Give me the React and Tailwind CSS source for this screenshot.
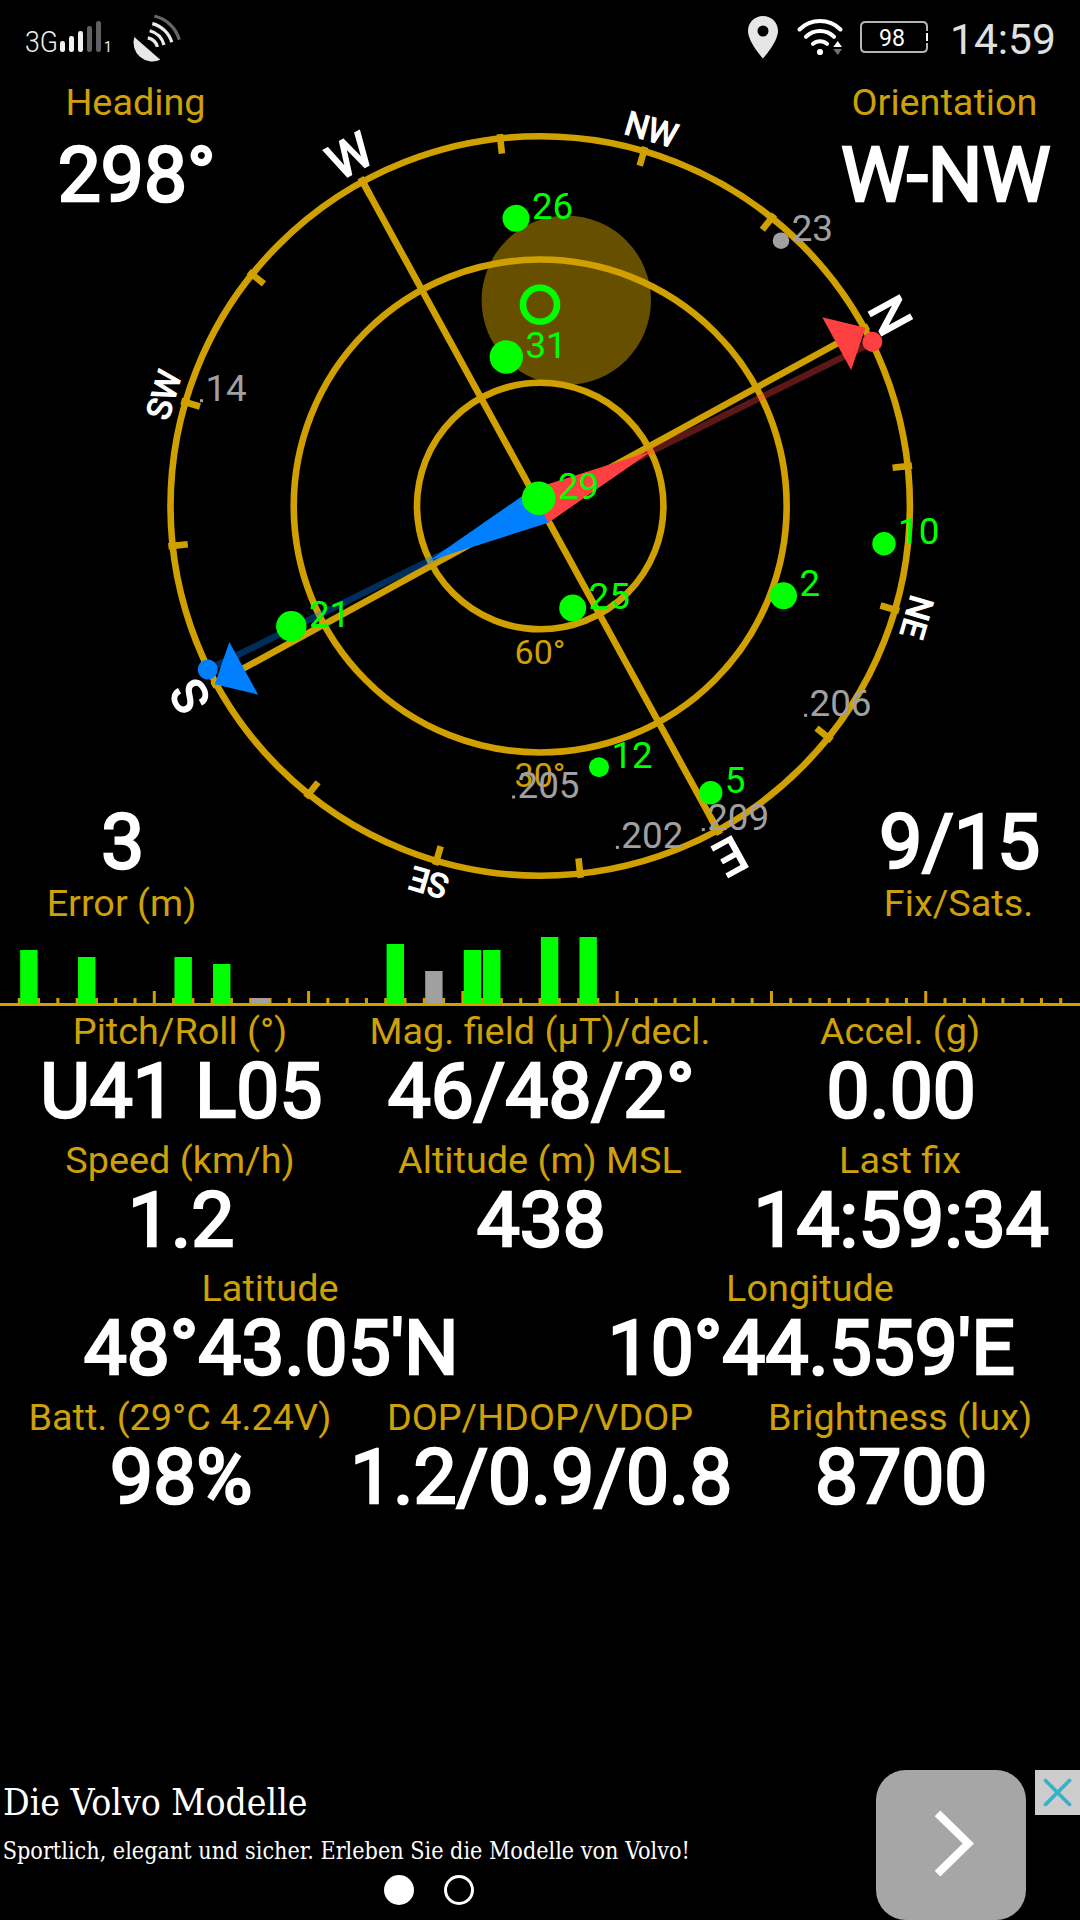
import React from 'react';

const GOLD = '#d0a000';
const GREEN = '#00ff00';
const GRAY = '#a0a0a0';
const RED = '#ff4040';
const BLUE = '#0080ff';

const CENTER = { x: 540.2, y: 506 };
const RADIUS = 369.7;
const NORTH = 61.3;
const MAGNETIC = 63.8;

const directions = [
  { name: 'N', offset: 0, main: true },
  { name: 'NE', offset: 45 },
  { name: 'E', offset: 90, main: true },
  { name: 'SE', offset: 135 },
  { name: 'S', offset: 180, main: true },
  { name: 'SW', offset: 225 },
  { name: 'W', offset: 270, main: true },
  { name: 'NW', offset: 315 },
];

const satellites = [
  { id: '26', x: 516, y: 218.3, r: 13.5, fix: true },
  { id: '31', x: 506.3, y: 357, r: 16.7, fix: true },
  { id: '29', x: 538.7, y: 498.2, r: 16.8, fix: true },
  { id: '25', x: 572.7, y: 608, r: 13.5, fix: true },
  { id: '2', x: 783.5, y: 595.7, r: 13.5, fix: true },
  { id: '10', x: 884, y: 543.7, r: 11.7, fix: true },
  { id: '12', x: 599, y: 767.2, r: 10, fix: true },
  { id: '5', x: 710.7, y: 792.7, r: 11.7, fix: true },
  { id: '21', x: 291.3, y: 626.2, r: 15.2, fix: true },
  { id: '23', x: 781, y: 240.7, r: 8.3 },
  { id: '14', x: 201.5, y: 400.7, r: 1.5 },
  { id: '205', x: 513.6, y: 797, r: 1.5 },
  { id: '202', x: 617.4, y: 847.4, r: 1.5 },
  { id: '209', x: 703.3, y: 829.6, r: 1.5 },
  { id: '206', x: 805.6, y: 715.3, r: 1.5 },
];

const signals = [
  { slot: 1, top: 950, fix: true },
  { slot: 4, top: 957, fix: true },
  { slot: 9, top: 957, fix: true },
  { slot: 11, top: 964, fix: true },
  { slot: 13, top: 998 },
  { slot: 20, top: 944, fix: true },
  { slot: 22, top: 971 },
  { slot: 24, top: 950, fix: true },
  { slot: 25, top: 950, fix: true },
  { slot: 28, top: 937, fix: true },
  { slot: 30, top: 937, fix: true },
];

const rows = [
  [
    { label: 'Pitch/Roll (°)', value: 'U41 L05' },
    { label: 'Mag. field (µT)/decl.', value: '46/48/2°' },
    { label: 'Accel. (g)', value: '0.00' },
  ],
  [
    { label: 'Speed (km/h)', value: '1.2' },
    { label: 'Altitude (m) MSL', value: '438' },
    { label: 'Last fix', value: '14:59:34' },
  ],
  [
    { label: 'Latitude', value: "48°43.05'N" },
    { label: 'Longitude', value: "10°44.559'E" },
  ],
  [
    { label: 'Batt. (29°C 4.24V)', value: '98%' },
    { label: 'DOP/HDOP/VDOP', value: '1.2/0.9/0.8' },
    { label: 'Brightness (lux)', value: '8700' },
  ],
];

const Label = ({ children }) => (
  <div className="text-[37.8px] leading-[45px] text-[#cea00a] whitespace-nowrap">{children}</div>
);

const Value = ({ children }) => (
  <div className="pt-px pl-[2.4px] text-[76.6px] leading-[73px] text-white whitespace-nowrap [-webkit-text-stroke:2.6px_white]">
    {children}
  </div>
);

const StatusBar = () => (
  <header className="flex h-[76px] items-start justify-between">
    <svg className="h-[76px] w-[200px]" viewBox="0 0 200 76">
      <text x="25" y="52" fontSize="29" fontWeight="300" fill="#f0f0f0" textLength="33" lengthAdjust="spacingAndGlyphs">
        3G
      </text>
      {[41, 36, 31, 26, 21].map((top, i) => (
        <rect key={top} x={60 + i * 9} y={top} width="5" height={52 - top} rx="2.2" fill={i < 3 ? '#f0f0f0' : '#606060'} />
      ))}
      <text x="104" y="52" fontSize="14" fill="#f0f0f0">1</text>
      <path d="M134.3 37 L160.3 59.7 A18.9 18.9 0 0 1 134.3 37 Z" fill="#e8e8e8" />
      <g fill="none" stroke="#ececec" strokeWidth="3.2">
        <path d="M147.8 37.9 A13 13 0 0 1 157.5 46.9" />
        <path d="M149.7 30.8 A20 20 0 0 1 164 45" />
        <path d="M152.3 23.6 A27 27 0 0 1 171.8 42.2" />
        <path d="M154.4 16 A34 34 0 0 1 179.3 39.8" stroke="#666666" />
      </g>
    </svg>

    <svg className="h-[76px] w-[360px]" viewBox="720 0 360 76">
      <path
        fillRule="evenodd"
        fill="#e6e6e6"
        d="M763 16 C754.6 16 748 22.6 748 31 C748 42 763 58.5 763 58.5 C763 58.5 778 42 778 31 C778 22.6 771.4 16 763 16 Z M763 25.5 A5.5 5.5 0 1 1 763 36.5 A5.5 5.5 0 1 1 763 25.5 Z"
      />
      <g fill="none" stroke="#ffffff" strokeWidth="4" strokeLinecap="round">
        <path d="M799.5 29.5 A29 29 0 0 1 840.5 29.5" />
        <path d="M806 36.8 A20 20 0 0 1 834 36.8" />
        <path d="M813 43.8 A10.5 10.5 0 0 1 827 43.8" />
      </g>
      <circle cx="820" cy="52" r="3.1" fill="#ffffff" />
      <path d="M833.3 47 L837.7 41 L842 47 Z" fill="#ffffff" />
      <path d="M833.3 49 L837.7 55 L842 49 Z" fill="#707070" />
      <path
        d="M927 31 V26.5 Q927 22 922.5 22 H865.5 Q861 22 861 26.5 V47.5 Q861 52 865.5 52 H922.5 Q927 52 927 47.5 V43"
        fill="none"
        stroke="#b4b4b4"
        strokeWidth="2"
      />
      <path d="M927 33 V41" stroke="#ffffff" strokeWidth="2" />
      <text x="879" y="45.7" fontSize="23.5" fill="#ffffff" textLength="26" lengthAdjust="spacingAndGlyphs">98</text>
      <text x="950" y="54.3" fontSize="42.5" fill="#e0e0e0">14:59</text>
    </svg>
  </header>
);

const Needle = ({ color, angle }) => (
  <g transform={`translate(${CENTER.x} ${CENTER.y}) rotate(${angle})`}>
    <path d={`M0 0 V${-RADIUS}`} stroke={color} strokeOpacity="0.36" strokeWidth="6.6" />
    <path d="M-18.6 0 L0 -124 L18.6 0 Z" fill={color} />
  </g>
);

const Pointer = ({ color, angle, dotAngle }) => (
  <>
    <path
      transform={`translate(${CENTER.x} ${CENTER.y}) rotate(${angle})`}
      d="M0 -371 L-30 -338 L30 -338 Z"
      fill={color}
    />
    <circle
      transform={`translate(${CENTER.x} ${CENTER.y}) rotate(${dotAngle})`}
      cx="0"
      cy="-370.5"
      r="10"
      fill={color}
    />
  </>
);

const SkyPlot = () => (
  <svg className="col-start-1 row-start-1 h-[860px] w-[1080px]" viewBox="0 76 1080 860">
    {/* Sun / moon area */}
    <circle cx="566.3" cy="300.3" r="84.7" fill="#665000" />

    <g fill="none" stroke={GOLD} strokeWidth="6.6">
      <circle cx={CENTER.x} cy={CENTER.y} r={RADIUS} />
      <circle cx={CENTER.x} cy={CENTER.y} r={(RADIUS * 2) / 3} />
      <circle cx={CENTER.x} cy={CENTER.y} r={RADIUS / 3} />
      <g transform={`translate(${CENTER.x} ${CENTER.y}) rotate(${NORTH})`}>
        <path d="M0 -374 V374 M-374 0 H374" />
        {Array.from({ length: 16 }, (_, i) => (
          <path key={i} d="M0 -374 V-354.5" transform={`rotate(${i * 22.5})`} />
        ))}
      </g>
    </g>

    <text x="540" y="664.2" fontSize="34" fill={GOLD} textAnchor="middle">60°</text>
    <text x="540" y="787.2" fontSize="34" fill={GOLD} textAnchor="middle">30°</text>

    {directions.map((d) => (
      <text
        key={d.name}
        transform={`translate(${CENTER.x} ${CENTER.y}) rotate(${NORTH + d.offset})`}
        x="1"
        y={d.main ? -381.5 : -381}
        fontSize={d.main ? 48.5 : 33}
        fill="#ffffff"
        stroke="#ffffff"
        strokeWidth={d.main ? 1.9 : 1.4}
        textAnchor="middle"
      >
        {d.name}
      </text>
    ))}

    <Needle color={RED} angle={MAGNETIC} />
    <Needle color={BLUE} angle={MAGNETIC + 180} />
    <Pointer color={RED} angle={NORTH} dotAngle={MAGNETIC - 0.1} />
    <Pointer color={BLUE} angle={NORTH + 180} dotAngle={MAGNETIC + 180} />

    <circle cx="540" cy="304.7" r="17" fill="none" stroke={GREEN} strokeWidth="6.6" />

    {satellites.map((s) => (
      <g key={s.id} fill={s.fix ? GREEN : GRAY}>
        {s.r < 2 ? (
          <rect x={s.x - s.r} y={s.y - s.r} width={s.r * 2} height={s.r * 2} />
        ) : (
          <circle cx={s.x} cy={s.y} r={s.r} />
        )}
        <text x={s.x + s.r + 2.4} y={s.y + 0.5} fontSize="36.8">{s.id}</text>
      </g>
    ))}
  </svg>
);

const SignalStrip = () => (
  <svg className="block h-[73px] w-[1080px]" viewBox="0 936 1080 73">
    {Array.from({ length: 55 }, (_, i) => {
      const top = (i + 1) % 8 === 0 ? 991 : 998;
      return <rect key={i} x={(i + 1) * 19.286 - 1.5} y={top} width="3" height={1003 - top} fill={GOLD} />;
    })}
    <rect x="0" y="1003" width="1080" height="3" fill={GOLD} />
    {signals.map((s) => (
      <rect
        key={s.slot}
        x={s.slot * 19.286 + 0.9}
        y={s.top}
        width="17.4"
        height={1003.5 - s.top}
        fill={s.fix ? GREEN : GRAY}
      />
    ))}
  </svg>
);

const AdBanner = () => (
  <footer className="mt-auto flex h-[150px] items-start">
    <div className="h-[150px] w-[876px] font-['DejaVu_Serif_Condensed','DejaVu_Serif',serif] text-white">
      <div className="origin-left scale-x-[0.985] pl-[3px] pt-[10px] text-[37.6px] leading-[44px] whitespace-nowrap">
        Die Volvo Modelle
      </div>
      <div className="origin-left scale-x-[0.926] pl-[3px] pt-[10px] text-[25px] leading-[34px] whitespace-nowrap">
        Sportlich, elegant und sicher. Erleben Sie die Modelle von Volvo!
      </div>
      <div className="mt-[7px] flex gap-[30px] pl-[384px]">
        <span className="size-[30px] rounded-full bg-white" />
        <span className="size-[30px] rounded-full border-[3px] border-white" />
      </div>
    </div>
    <button className="size-[150px] rounded-[30px] bg-[#a6a6a6]">
      <svg viewBox="0 0 150 150" className="size-[150px]">
        <path d="M61.5 43.3 L92.3 73.5 L61.5 103.7" fill="none" stroke="#ffffff" strokeWidth="8" />
      </svg>
    </button>
    <button className="ml-[9px] size-[45px] bg-[#cccccc]">
      <svg viewBox="0 0 45 45" className="size-[45px]">
        <path d="M10.5 10.5 L34.5 34.5 M34.5 10.5 L10.5 34.5" stroke="#2fb4d0" strokeWidth="3.8" strokeLinecap="round" />
      </svg>
    </button>
  </footer>
);

const App = () => {
  return (
    <div className="flex h-[1920px] w-[1080px] flex-col overflow-hidden bg-black font-[Roboto,sans-serif]">
      <StatusBar />

      <section className="grid h-[860px]">
        <SkyPlot />
        <div className="col-start-1 row-start-1 flex flex-col justify-between pb-[10px] pt-1 text-center">
          <div className="flex justify-between">
            <div className="flex w-[271px] flex-col items-center gap-[13px]">
              <Label>Heading</Label>
              <Value>298°</Value>
            </div>
            <div className="flex w-[271px] flex-col items-center gap-[13px]">
              <Label>Orientation</Label>
              <Value>W-NW</Value>
            </div>
          </div>
          <div className="flex justify-between">
            <div className="flex w-[243px] flex-col items-center gap-[2px]">
              <Value>3</Value>
              <Label>Error (m)</Label>
            </div>
            <div className="flex w-[243px] flex-col items-center gap-[2px]">
              <Value>9/15</Value>
              <Label>Fix/Sats.</Label>
            </div>
          </div>
        </div>
      </section>

      <SignalStrip />

      <section className="flex flex-col gap-[9.5px]">
        {rows.map((row, i) => (
          <div key={i} className="flex">
            {row.map((item) => (
              <div key={item.label} className="flex min-w-0 flex-1 basis-0 flex-col items-center">
                <Label>{item.label}</Label>
                <Value>{item.value}</Value>
              </div>
            ))}
          </div>
        ))}
      </section>

      <AdBanner />
    </div>
  );
};

export default App;
